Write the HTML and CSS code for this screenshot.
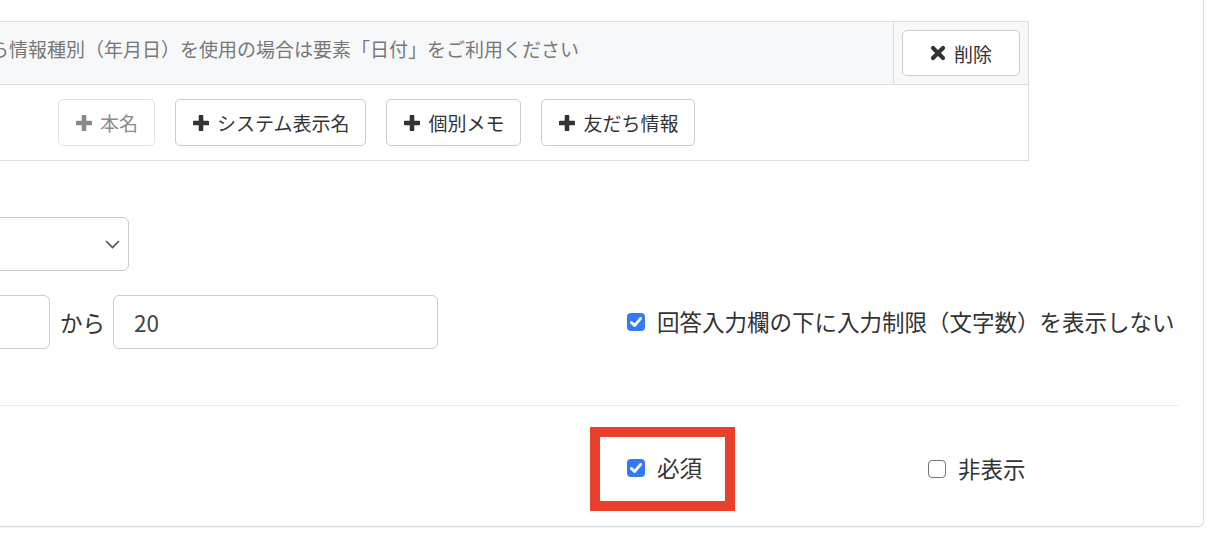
FILE: index.html
```html
<!DOCTYPE html>
<html lang="ja">
<head>
<meta charset="utf-8">
<title>要素設定</title>
<link rel="stylesheet" href="styles.css">
</head>
<body>
<div class="viewport">
  <div class="card">
    <div class="elem-table">
      <div class="elem-head">
        <div class="elem-note">友だち情報から情報種別（年月日）を使用の場合は要素「日付」をご利用ください</div>
        <div class="elem-action">
          <button class="btn btn-delete" type="button">
            <svg class="ico" width="16" height="16" viewBox="0 0 16 16"><path d="M3 3L13 13M13 3L3 13" stroke="currentColor" stroke-width="4.2" stroke-linecap="round" fill="none"/></svg>
            <span>削除</span>
          </button>
        </div>
      </div>
      <div class="elem-body">
        <button class="btn btn-insert is-disabled" type="button">
          <svg class="ico" width="16" height="16" viewBox="0 0 16 16"><path d="M8 1.5V14.5M1.5 8H14.5" stroke="currentColor" stroke-width="4.6" stroke-linecap="round" fill="none"/></svg>
          <span>本名</span>
        </button>
        <button class="btn btn-insert" type="button">
          <svg class="ico" width="16" height="16" viewBox="0 0 16 16"><path d="M8 1.5V14.5M1.5 8H14.5" stroke="currentColor" stroke-width="4.6" stroke-linecap="round" fill="none"/></svg>
          <span>システム表示名</span>
        </button>
        <button class="btn btn-insert" type="button">
          <svg class="ico" width="16" height="16" viewBox="0 0 16 16"><path d="M8 1.5V14.5M1.5 8H14.5" stroke="currentColor" stroke-width="4.6" stroke-linecap="round" fill="none"/></svg>
          <span>個別メモ</span>
        </button>
        <button class="btn btn-insert" type="button">
          <svg class="ico" width="16" height="16" viewBox="0 0 16 16"><path d="M8 1.5V14.5M1.5 8H14.5" stroke="currentColor" stroke-width="4.6" stroke-linecap="round" fill="none"/></svg>
          <span>友だち情報</span>
        </button>
      </div>
    </div>

    <div class="form-row select-row">
      <div class="select">
        <svg class="chevron" width="15" height="9" viewBox="0 0 15 9"><polyline points="1,1 7.5,7.5 14,1" stroke="#555" stroke-width="1.7" fill="none"/></svg>
      </div>
    </div>

    <div class="form-row range-row">
      <input class="input input-min" type="text" value="">
      <span class="from">から</span>
      <input class="input input-max" type="text" value="20">
      <label class="check range-check">
        <span class="cb is-checked"><svg width="18" height="18" viewBox="0 0 18 18"><polyline points="4.4,9.4 7.6,12.6 13.6,5.4" stroke="#fff" stroke-width="2.8" stroke-linecap="round" stroke-linejoin="round" fill="none"/></svg></span>
        <span>回答入力欄の下に入力制限（文字数）を表示しない</span>
      </label>
    </div>

    <hr class="divider">

    <div class="footer-row">
      <div class="highlight">
        <label class="check">
          <span class="cb is-checked"><svg width="18" height="18" viewBox="0 0 18 18"><polyline points="4.4,9.4 7.6,12.6 13.6,5.4" stroke="#fff" stroke-width="2.8" stroke-linecap="round" stroke-linejoin="round" fill="none"/></svg></span>
          <span>必須</span>
        </label>
      </div>
      <label class="check hide-check">
        <span class="cb"></span>
        <span>非表示</span>
      </label>
    </div>
  </div>
</div>
</body>
</html>
```

FILE: styles.css
```css
html, body {
  margin: 0;
  padding: 0;
  background: #ffffff;
}

body {
  font-family: "Noto Sans CJK JP", "Noto Sans", sans-serif;
  color: #333333;
  overflow: hidden;
}

.viewport {
  width: 1215px;
  height: 538px;
  overflow: hidden;
}

.card {
  box-sizing: border-box;
  width: 1404px;
  margin-left: -200px;
  margin-top: -20px;
  padding: 40px 24px 15px 24px;
  border: 1px solid #dcdcdc;
  border-radius: 6px;
  background: #fff;
  box-shadow: 0 1px 2px rgba(0, 0, 0, 0.06);
}

/* element table */
.elem-table {
  box-sizing: border-box;
  width: 1204px;
  border: 1px solid #dddddd;
}

.elem-head {
  display: flex;
  background: #f7f8fa;
  border-bottom: 1px solid #dddddd;
}

.elem-note {
  flex: 1;
  padding: 12px 12px 0 50px;
  font-size: 19px;
  line-height: 30px;
  color: #777777;
  white-space: nowrap;
  overflow: hidden;
}

.elem-action {
  box-sizing: border-box;
  width: 135px;
  padding: 8px;
  border-left: 1px solid #dddddd;
}

.btn {
  box-sizing: border-box;
  display: inline-flex;
  align-items: center;
  justify-content: center;
  gap: 8px;
  background: #ffffff;
  border: 1px solid #cccccc;
  border-radius: 5px;
  font-family: inherit;
  font-size: 19px;
  line-height: 1;
  color: #333333;
  cursor: pointer;
}

.ico {
  flex: none;
  display: block;
}

.btn-delete {
  width: 118px;
  height: 46px;
  padding: 0;
}

.elem-body {
  display: flex;
  gap: 20px;
  padding: 14px 0 14px 232px;
}

.btn-insert {
  height: 47px;
  padding: 0 16px 0 17px;
}

.btn-insert.is-disabled {
  color: #8a8a8a;
  border-color: #e2e2e2;
}

/* form rows */
.form-row {
  display: flex;
  align-items: center;
}

.select-row {
  margin-top: 56px;
}

.select {
  box-sizing: border-box;
  width: 304px;
  height: 54px;
  border: 1px solid #cccccc;
  border-radius: 6px;
  display: flex;
  align-items: center;
  justify-content: flex-end;
  padding-right: 8px;
}

.chevron {
  display: block;
}

.range-row {
  margin-top: 24px;
}

.input {
  box-sizing: border-box;
  height: 54px;
  border: 1px solid #cccccc;
  border-radius: 6px;
  padding: 0 20px;
  font-family: "Noto Sans CJK JP", "Noto Sans", sans-serif;
  font-size: 22.5px;
  color: #444444;
  background: #fff;
  outline: none;
}

.input-min {
  width: 225px;
}

.input-max {
  width: 325px;
}

.from {
  margin: 0 8px 0 10px;
  font-size: 22.5px;
  line-height: 1;
  color: #333333;
}

.check {
  display: inline-flex;
  align-items: center;
  gap: 12px;
  font-size: 22.5px;
  line-height: 1.3;
  color: #333333;
  white-space: nowrap;
}

.cb {
  box-sizing: border-box;
  flex: none;
  width: 18px;
  height: 18px;
  border-radius: 4px;
  border: 1.5px solid #767676;
  background: #ffffff;
  display: flex;
  align-items: center;
  justify-content: center;
}

.cb.is-checked {
  border: none;
  background: #3479f6;
}

.cb svg {
  display: block;
}

.range-check {
  margin-left: 189px;
}

.divider {
  margin: 56px 0 0 0;
  border: none;
  border-top: 1px solid #eeeeee;
  height: 0;
}

.footer-row {
  display: flex;
  align-items: center;
  margin-top: 21px;
}

.highlight {
  box-sizing: border-box;
  width: 145px;
  height: 84px;
  margin-left: 765px;
  border: 10px solid #e8402b;
  display: flex;
  align-items: center;
  padding: 0 0 2px 27px;
}

.hide-check {
  margin-left: 193px;
}
```
